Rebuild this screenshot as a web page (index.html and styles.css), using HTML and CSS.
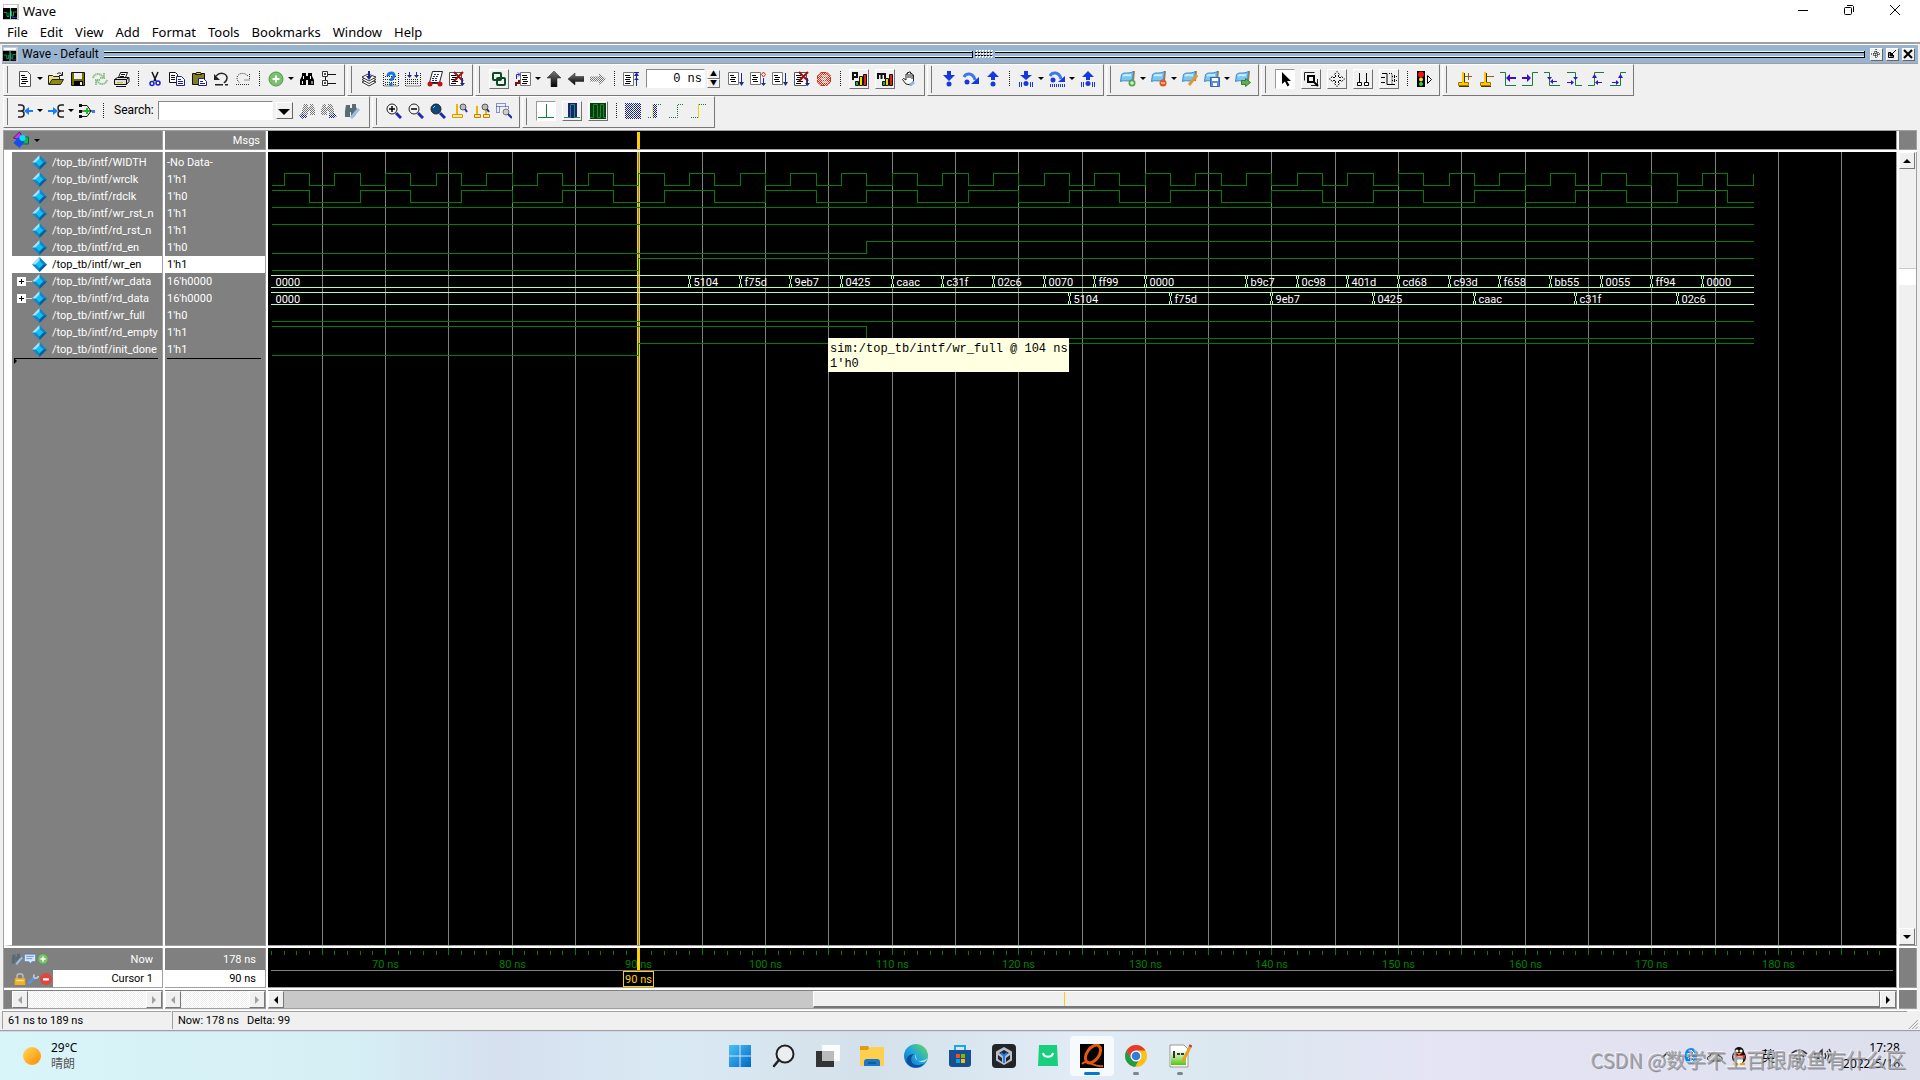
FILE: index.html
```html
<!DOCTYPE html>
<html lang="en">

<head>
    <meta charset="UTF-8">
    <meta name="viewport" content="width=device-width, initial-scale=1.0">
    <title>Wave</title>
    <link rel="stylesheet" href="styles.css">
</head>

<body>
    <!-- toolbar icons, 16x16 grid -->
    <svg class="sprite" width="0" height="0" aria-hidden="true">
        <defs>
            <linearGradient id="g-blue" x1="0" y1="0" x2="1" y2="1"><stop offset="0" stop-color="#4cc2f7"/><stop offset="1" stop-color="#0067c8"/></linearGradient>
            <linearGradient id="g-edge" x1="0" y1="1" x2="1" y2="0"><stop offset="0" stop-color="#0b62c4"/><stop offset=".5" stop-color="#1fa6dc"/><stop offset="1" stop-color="#6be04a"/></linearGradient>
            <linearGradient id="g-sun" x1="0" y1="0" x2="1" y2="1"><stop offset="0" stop-color="#ffd95a"/><stop offset="1" stop-color="#ff8a00"/></linearGradient>
            <linearGradient id="g-dark" x1="0" y1="0" x2="0" y2="1"><stop offset="0" stop-color="#777"/><stop offset="1" stop-color="#000"/></linearGradient>
            <linearGradient id="g-note" x1="0" y1="0" x2="0" y2="1"><stop offset="0" stop-color="#fff"/><stop offset="1" stop-color="#54c70c"/></linearGradient>
            <pattern id="p-dot" width="2" height="2" patternUnits="userSpaceOnUse"><path d="M0 0h1v1H0zM1 1h1v1H1z" fill="#777"/></pattern>
            <pattern id="p-navy" width="2" height="2" patternUnits="userSpaceOnUse"><path d="M0 0h1v1H0zM1 1h1v1H1z" fill="#1b1f80"/></pattern>
            <pattern id="p-red" width="2" height="2" patternUnits="userSpaceOnUse"><path d="M0 0h1v1H0zM1 1h1v1H1z" fill="#e8220c"/></pattern>
        </defs>
        <symbol id="wave" viewBox="0 0 16 16"><path fill="#c8c8c8" d="M0 0h16v16H0z"/><path fill="#fff" d="M1 1h13v3H1z"/><path d="M0 4h14v11H0z"/><path fill="none" stroke="#12a53c" d="M1 8.500h3v4h2v-4M8.500 7v5h2V8h3"/><path stroke="#56d7e8" d="M7.500 4v11"/><path stroke="#3527c9" d="M9 13.500h5"/></symbol>
        <symbol id="doc" viewBox="0 0 16 16"><path fill="#fff" stroke="#555" d="M2.500.5h8l3 3v12h-11z"/><path stroke="#000" d="M4 4.500h4M5 6.500h5M4 8.500h6M5 10.500h6M4 12.500h5"/></symbol>
        <symbol id="open" viewBox="0 0 16 16"><path fill="#e8e070" stroke="#222" d="M.5 13.500v-9h4l1 1h6v3"/><path fill="#8c8a10" stroke="#222" d="M1 13.500l3-5h11.500l-3 5z"/><path fill="none" stroke="#111" d="M9 3c2-2 4-1 5 1M14.500 1v3.500H11"/></symbol>
        <symbol id="save" viewBox="0 0 16 16"><path fill="#6f6f00" stroke="#111" d="M1.500 1.500h13v13h-13z"/><path fill="#eee" d="M4 2h8v6H4z"/><path d="M4 10h9v5H4z"/><path fill="#eee" d="M10 11h2v3h-2z"/></symbol>
        <symbol id="refresh" viewBox="0 0 16 16"><g fill="none" stroke="#8cc08a" stroke-width="2" stroke-dasharray="1.500 .5"><path d="M1 7c1-4 5-5 8-3l3 2M15 9c-1 4-5 5-8 3L4 10"/><path d="M12 2v5H8M4 14V9h4"/></g></symbol>
        <symbol id="print" viewBox="0 0 16 16"><path fill="#fff" stroke="#111" d="M4.500 6.500l2-5h7l-2 5z"/><path fill="#ddd" stroke="#111" d="M.5 8.500l3-2h11l-2 2zM.5 8.500h12v5H.5zM12.500 13.500l2.500-3v-4l-2.500 2"/><path stroke="#c8c400" d="M3 11.500h6"/><path stroke="#111" d="M7 3.500h4M6 5.500h4M2 15.500h10"/></symbol>
        <symbol id="cut" viewBox="0 0 16 16"><path fill="none" stroke="#111" stroke-width="1.500" d="M5 1l4 9M11 1L7 10"/><g fill="none" stroke="#1420d8" stroke-width="1.500"><circle cx="5" cy="12.500" r="2"/><circle cx="11" cy="12" r="2"/></g></symbol>
        <symbol id="copy" viewBox="0 0 16 16"><path fill="#fff" stroke="#111" d="M.5 1.500h6l2 2v8h-8z"/><path stroke="#111" d="M2 4.500h4M2 6.500h4M2 8.500h4"/><path fill="#fff" stroke="#1b1f90" d="M7.500 5.500h5l3 3v6h-8z"/><path stroke="#1b1f90" d="M9 8.500h3M9 10.500h5M9 12.500h5"/></symbol>
        <symbol id="paste" viewBox="0 0 16 16"><path fill="#827e20" stroke="#111" d="M1.500 2.500h12v11h-12z"/><path fill="#f3e400" stroke="#111" d="M4.500 3.500l1-2h4l1 2z"/><path fill="#fff" stroke="#1b1f90" d="M7.500 7.500h5l3 3v4h-8z"/><path stroke="#1b1f90" d="M9 10.500h3M9 12.500h5"/></symbol>
        <symbol id="undo" viewBox="0 0 16 16"><path fill="none" stroke="#222" stroke-width="1.500" d="M3 5c5-5 11-2 11 2 0 3-2 4-3 5"/><path fill="#222" d="M1 3v6h6zM2 13h8v1.500H2zM12 13h3v1.500h-3z"/></symbol>
        <symbol id="redo" viewBox="0 0 16 16"><g fill="none" stroke="#333" stroke-dasharray="1 1"><path d="M13 5C8 0 2 3 2 7c0 3 2 4 3 5M14.500 3v6H9M1 13.500h14"/></g></symbol>
        <symbol id="plus" viewBox="0 0 16 16"><circle cx="8" cy="8" r="7" fill="#7cbf6d" stroke="#4b9b43"/><path stroke="#fff" stroke-width="2" d="M8 4.500v7M4.500 8h7"/></symbol>
        <symbol id="find" viewBox="0 0 16 16"><path d="M3 2h4v3h2V2h4v3l2 4v5h-6V9H7v5H1V9l2-4z"/><path stroke="#fff" d="M4.500 5v3M11.500 5v3M3.500 10v3M13 10v3"/></symbol>
        <symbol id="tree" viewBox="0 0 16 16"><path fill="#fff" stroke="#333" d="M1.500.5h5v5h-5zM1.500 9.500h5v5h-5z"/><path stroke="#111" d="M3 3h2M4 2v2M3 12h2M4 11v2M7 3.500h8M7 12.500h8M4.500 6v3"/></symbol>
        <symbol id="compile" viewBox="0 0 16 16"><g fill="#fff" stroke="#333"><path d="M1 11l6-3 8 3-7 4z"/><path d="M1 8.500l6-3 8 3-7 4z"/><path d="M1 6l6-3 8 3-7 4z"/></g><path fill="#1b2a90" d="M7 0h2v5h2L8 9 5 5h2z"/></symbol>
        <symbol id="compile-q" viewBox="0 0 16 16"><path fill="none" stroke="#222" stroke-dasharray="1 1" d="M.5 2v13h15V2M2 5.500h12M2 8.500h12M2 11.500h12M2 13.500h12"/><path fill="none" stroke="#1878e0" stroke-width="3" d="M5 5c0-4 7-4 6 0 0 2-3 2-3 5M8 12v3"/></symbol>
        <symbol id="compile-all" viewBox="0 0 16 16"><path fill="none" stroke="#222" stroke-dasharray="1 1" d="M.5 2v13h15V2M2 8.500h12M2 10.500h12M2 12.500h12"/><path fill="#1b2a90" d="M4 1h1v3h2L4.500 7 2 4h2zM11 1h1v3h2l-2.500 3L9 4h2z"/></symbol>
        <symbol id="simulate" viewBox="0 0 16 16"><path fill="#fff" stroke="#222" d="M5.500.5h10l-3 11h-10z"/><path stroke="#1b2a90" stroke-dasharray="2 1" d="M7 3.500h6M6 5.500h6M5 7.500h6M5 9.500h6"/><path stroke="#333" d="M3 12.500h9"/><circle cx="3" cy="13" r="2.500" fill="#c81010"/><circle cx="13" cy="13" r="2.500" fill="#c81010"/></symbol>
        <symbol id="break" viewBox="0 0 16 16"><path fill="#fff" stroke="#555" d="M.5 1.500h12v13H.5z"/><path stroke="#000" d="M2 4.500h5M3 6.500h6M2 8.500h6M3 10.500h6M2 12.500h5"/><path stroke="#a01010" stroke-width="2" d="M5 1l9 9M14 1L5 10"/><path fill="#1b2a90" d="M13 7h1v5h2l-2.500 3L11 12h2z"/></symbol>
        <symbol id="links" viewBox="0 0 16 16"><g fill="none" stroke="#0b4a26" stroke-width="2"><rect x="2" y="2" width="8" height="7" rx="1"/><rect x="6" y="7" width="8" height="7" rx="1"/></g></symbol>
        <symbol id="env" viewBox="0 0 16 16"><path fill="#fff" stroke="#777" d="M5.500 1.500h10v13h-10z"/><path stroke="#000" d="M7 4.500h5M8 6.500h5M7 8.500h5M8 10.500h5M7 12.500h5"/><path fill="none" stroke="#1525c8" d="M1.500 8V3.500h3M3 1.500l2 2-2 2"/><path fill="none" stroke="#801010" stroke-width="2" d="M4 9v3H1v3"/></symbol>
        <symbol id="arrow-up" viewBox="0 0 16 16"><path fill="url(#g-dark)" stroke="#222" stroke-width=".5" d="M8 0l7 7h-4v9H5V7H1z"/></symbol>
        <symbol id="arrow-left" viewBox="0 0 16 16"><path fill="url(#g-dark)" stroke="#222" stroke-width=".5" d="M0 8l7-6v3.500h9v5H7V14z"/></symbol>
        <symbol id="arrow-right" viewBox="0 0 16 16"><path fill="url(#p-dot)" d="M16 8L9 2v3.500H0v5h9V14z"/></symbol>
        <symbol id="restart" viewBox="0 0 16 16"><path fill="#fff" stroke="#777" d="M.5 1.500h10v13H.5z"/><path stroke="#000" d="M2 4.500h5M3 6.500h5M2 8.500h5M3 10.500h5M2 12.500h5"/><path fill="#1b2a90" d="M11 1h5v1h-2l2 3h-2v2l2 2h-2v6h-1V9h-2l2-2V5h-2l2-3h-2z"/></symbol>
        <symbol id="run" viewBox="0 0 16 16"><path fill="#fff" stroke="#777" d="M.5 1.500h10v12H.5z"/><path stroke="#000" d="M2 4.500h4M3 6.500h5M2 8.500h5M3 10.500h5"/><path fill="#1b2a90" d="M13 2h1v9h2l-2.500 4-2.500-4h2z"/></symbol>
        <symbol id="run-cont" viewBox="0 0 16 16"><path fill="#fff" stroke="#777" d="M.5 1.500h10v12H.5z"/><path stroke="#000" d="M2 4.500h4M3 6.500h5M2 8.500h5M3 10.500h5"/><path fill="none" stroke="#e8220c" d="M13.500 1l2 2.500-2 2.500-2-2.500z"/><path fill="#1b2a90" d="M13 7h1v5h2l-2.500 3-2.500-3h2z"/></symbol>
        <symbol id="stop" viewBox="0 0 16 16"><path fill="url(#p-red)" d="M5 1h6l4 4v6l-4 4H5l-4-4V5z"/><path fill="none" stroke="#e8220c" d="M5 1.500h6l3.500 3.500v6L11 14.500H5L1.500 11V5z" stroke-dasharray="2 1"/><path stroke="#fff" d="M6 5h6M5 8h5M6 11h6"/></symbol>
        <symbol id="perf" viewBox="0 0 16 16"><path fill="none" stroke="#111" stroke-width="2" d="M2 9V2h4v4H2"/><path stroke="#111" fill="#18b818" d="M4.500 10.500h3v4h-3z"/><path stroke="#111" fill="#f5d800" d="M8.500 5.500h3v9h-3z"/><path stroke="#111" fill="#e82010" d="M12.500 3.500h3v11h-3z"/></symbol>
        <symbol id="mem" viewBox="0 0 16 16"><path fill="none" stroke="#111" stroke-width="2" d="M1 8V3h7v5M4.500 3v5"/><path stroke="#111" fill="#18b818" d="M5.500 10.500h3v4h-3z"/><path stroke="#111" fill="#f5d800" d="M8.500 7.500h3v7h-3z"/><path stroke="#111" fill="#e82010" d="M12.500 3.500h3v11h-3z"/></symbol>
        <symbol id="hand" viewBox="0 0 16 16"><path fill="#fff" stroke="#222" d="M5 13L1.500 8.500l1-1L5 9V3h1.500V1.500H8V1h1.500v1.500H11V4h1.500v6L10 14z"/><path stroke="#222" d="M7 3v4M9 3v4M11 4v4"/><path stroke="#8bb5e6" stroke-width="3" d="M9 14l4-3"/></symbol>
        <symbol id="step-in" viewBox="0 0 16 16"><path fill="#1738e0" d="M6 0h4v4h4L8 10 2 4h4z"/><circle cx="8" cy="13" r="2.500" fill="#1738e0"/></symbol>
        <symbol id="step-over" viewBox="0 0 16 16"><path fill="none" stroke="#3f78e8" stroke-width="3" d="M1 6c2-4 9-5 11 3"/><path fill="#1738e0" d="M16 6v7H8z"/><circle cx="4" cy="11" r="2.500" fill="#1738e0"/></symbol>
        <symbol id="step-out" viewBox="0 0 16 16"><path fill="#1738e0" d="M6 9h4V6h4L8 0 2 6h4z"/><circle cx="8" cy="13" r="2.500" fill="#1738e0"/></symbol>
        <symbol id="step-in2" viewBox="0 0 16 16"><path fill="#1738e0" d="M6 0h4v4h4L8 9 2 4h4z"/><circle cx="8" cy="12.500" r="2.500" fill="#1738e0"/><path stroke="#1738e0" d="M1.500 11v5M3.500 11v5M12.500 11v5M14.500 11v5"/></symbol>
        <symbol id="step-over2" viewBox="0 0 16 16"><path fill="none" stroke="#3f78e8" stroke-width="3" d="M1 5c2-4 9-5 11 3"/><path fill="#1738e0" d="M16 5v6H9z"/><circle cx="4" cy="9" r="2.500" fill="#1738e0"/><path stroke="#1738e0" stroke-width="3" stroke-dasharray="1 1" d="M1 14.500h15"/></symbol>
        <symbol id="step-out2" viewBox="0 0 16 16"><path fill="#1738e0" d="M6 9h4V6h4L8 0 2 6h4z"/><circle cx="8" cy="12.500" r="2.500" fill="#1738e0"/><path stroke="#1738e0" d="M1.500 11v5M3.500 11v5M12.500 11v5M14.500 11v5"/></symbol>
        <symbol id="flag" viewBox="0 0 16 16"><path stroke="#b87a2c" stroke-width="2" d="M14 0l-1 10"/><path fill="#79c8f4" stroke="#3f86c6" d="M1.500 3.500c3-3 6 0 12-3l-1 8c-5 3-8 0-12 2z"/><path stroke="#c8ecff" stroke-width="2" d="M3 5c3-2 5 0 8-1"/></symbol>
        <symbol id="flag-add" viewBox="0 0 16 16"><use href="#flag"/><circle cx="12" cy="12" r="3.500" fill="#57a84c"/><path stroke="#fff" d="M12 10v4M10 12h4"/></symbol>
        <symbol id="flag-del" viewBox="0 0 16 16"><use href="#flag"/><circle cx="12" cy="12" r="3.500" fill="#e05a1c"/><path stroke="#fff" d="M10 12h4"/></symbol>
        <symbol id="flag-edit" viewBox="0 0 16 16"><use href="#flag"/><path stroke="#d89a3c" stroke-width="3" d="M15 4l-8 10"/></symbol>
        <symbol id="flag-save" viewBox="0 0 16 16"><use href="#flag"/><path fill="#5a8fdc" stroke="#3564b0" d="M6.500 6.500h9v9h-9z"/><path fill="#fff" d="M8 7h6v3H8zM9 12h4v3H9z"/></symbol>
        <symbol id="flag-go" viewBox="0 0 16 16"><use href="#flag"/><path fill="#5fae52" stroke="#3a7d31" d="M6.500 9.500h4v-2l5 4-5 4v-2h-4z"/></symbol>
        <symbol id="pointer" viewBox="0 0 16 16"><path d="M5 1v12l3-2.500 2.500 5L12.500 14l-2.500-4h4z"/></symbol>
        <symbol id="zoom-mode" viewBox="0 0 16 16"><path fill="none" stroke="#222" d="M1.500 9.500v-8h10M14.500 8v6.500H8"/><path fill="none" stroke="#000" stroke-width="2" d="M5 5h6v6H5z"/><path stroke="#000" stroke-width="2" d="M11 11l4 4"/></symbol>
        <symbol id="pan" viewBox="0 0 16 16"><g fill="none" stroke="#111"><path d="M5.500 3.500L8 .5l2.500 3M5.500 12.500l2.500 3 2.500-3M3.500 5.500L.5 8l3 2.500M12.500 5.500l3 2.500-3 2.500M6.500 4v2.500H4M9.500 4v2.500H12M6.500 12V9.500H4M9.500 12V9.500H12" stroke-dasharray="2 1"/></g></symbol>
        <symbol id="two-cur" viewBox="0 0 16 16"><path stroke="#000" d="M4.500 2v10M11.500 2v10"/><path fill="#fff" stroke="#000" d="M2.500 11.500h4v3h-4zM9.500 11.500h4v3h-4z"/></symbol>
        <symbol id="edit-mode" viewBox="0 0 16 16"><path fill="none" stroke="#000" d="M1 2.500h5v11h8M0 6.500h4M0 11.500h4"/><path fill="none" stroke="#000" stroke-dasharray="1 1" d="M8 2.500h3v11M11 5.500h5M11 9.500h5M13.500 4v4M13.500 8v4"/></symbol>
        <symbol id="traffic" viewBox="0 0 16 16"><path d="M1 0h8v16H1z"/><circle cx="5" cy="3.500" r="3" fill="#f01414"/><circle cx="5" cy="8.500" r="2" fill="#efe63c"/><circle cx="5" cy="13" r="2" fill="#26d83c"/><path fill="#fff" stroke="#000" d="M11.500 4.500l4 4-4 4z"/></symbol>
        <symbol id="cur" viewBox="0 0 16 16"><path stroke="#3e3410" d="M3 15.500h10M8.500 2v10"/><path fill="#ffc800" stroke="#a07800" d="M2.500 11.500h10v3h-10z"/><path stroke="#ffc800" stroke-width="2" d="M7 1v11"/></symbol>
        <symbol id="cur-add" viewBox="0 0 16 16"><use href="#cur"/><path stroke="#8a6800" d="M9 5.500h7M12.500 2v7"/></symbol>
        <symbol id="cur-del" viewBox="0 0 16 16"><use href="#cur"/><path stroke="#8a6800" d="M9 5.500h7"/></symbol>
        <symbol id="prev-tr" viewBox="0 0 16 16"><path fill="none" stroke="#128038" d="M0 1.500h5.500v13H16"/><path fill="#3a10d0" d="M6 7l4-4v3h6v2h-6v3z"/></symbol>
        <symbol id="next-tr" viewBox="0 0 16 16"><path fill="none" stroke="#128038" d="M0 14.500h10.500v-13H16"/><path fill="#3a10d0" d="M9 7L5 3v3H0v2h5v3z"/></symbol>
        <symbol id="prev-fall" viewBox="0 0 16 16"><path fill="none" stroke="#128038" d="M0 1.500h5.500v13H16"/><path fill="#3a10d0" d="M3 6h5L5.500 9zM6 10.500l3-2.500v2h4v1H9v2z"/></symbol>
        <symbol id="next-fall" viewBox="0 0 16 16"><path fill="none" stroke="#128038" d="M1 1.500h8.500v13H16"/><path fill="#3a10d0" d="M7 6h5L9.500 9zM8 11.500L5 9v2H1v1h4v2z"/></symbol>
        <symbol id="prev-rise" viewBox="0 0 16 16"><path fill="none" stroke="#128038" d="M0 14.500h6.500v-13H16"/><path fill="#3a10d0" d="M4 7h5L6.500 3zM7 11.500L10 9v2h4v1h-4v2z"/></symbol>
        <symbol id="next-rise" viewBox="0 0 16 16"><path fill="none" stroke="#128038" d="M0 14.500h10.500v-13H16"/><path fill="#3a10d0" d="M8 7h5l-2.500-4zM9 11.500L6 9v2H2v1h4v2z"/></symbol>
        <symbol id="drivers" viewBox="0 0 16 16"><path fill="none" stroke="#222" stroke-width="1.500" d="M1 2h3c4 0 4 6 0 6H1M4 8c4 0 4 6 0 6H1"/><path fill="#1a7ef0" d="M7 8l5-4v3h4v2h-4v3z"/></symbol>
        <symbol id="readers" viewBox="0 0 16 16"><path fill="none" stroke="#222" stroke-width="1.500" d="M16 2h-3c-4 0-4 6 0 6h3M13 8c-4 0-4 6 0 6h3"/><path fill="#1a7ef0" d="M10 8L5 4v3H0v2h5v3z"/></symbol>
        <symbol id="trace" viewBox="0 0 16 16"><path fill="none" stroke="#111" d="M2 2.500h6l4 5.500-4 5.500H2M2 8h12"/><path fill="#111" d="M0 1h3v3H0zM0 7h3v3H0zM0 12h3v3H0z"/><path stroke="#18b828" stroke-width="2" d="M8 5v6M5 8h6"/><path fill="#3a78e8" d="M13 7h3v3h-3z"/></symbol>
        <symbol id="find-prev" viewBox="0 0 16 16"><path fill="url(#p-dot)" d="M5 1h4v3h2V1h3l2 6v5h-5V8H9v4H3V7z"/><path fill="url(#p-navy)" d="M0 13l4-4v3h4v3H4v1z"/></symbol>
        <symbol id="find-next" viewBox="0 0 16 16"><path fill="url(#p-dot)" d="M2 1h3v3h2V1h4l2 6v5H8V8H6v4H0V7z"/><path fill="url(#p-navy)" d="M16 13l-4-4v3H8v3h4v1z"/></symbol>
        <symbol id="find-opt" viewBox="0 0 16 16"><path fill="#5a6b74" d="M2 2h4v3h2V1h4v3l2 4-4 6H7V9H6v5H1V8z"/><path fill="none" stroke="#9bbde0" stroke-width="3" d="M15 6l-3 3-5 6"/></symbol>
        <symbol id="lens" viewBox="0 0 16 16"><circle cx="6" cy="6" r="5" stroke="#222"/><path stroke="#1d2bb0" stroke-width="3" d="M10 10l5 5"/></symbol>
        <symbol id="zoom-in" viewBox="0 0 16 16"><use href="#lens" fill="#f4f4f4"/><path stroke="#000" stroke-width="1.500" d="M3 6h6M6 3v6"/></symbol>
        <symbol id="zoom-out" viewBox="0 0 16 16"><use href="#lens" fill="#f4f4f4"/><path stroke="#000" stroke-width="1.500" d="M3 6h6"/></symbol>
        <symbol id="zoom-full" viewBox="0 0 16 16"><use href="#lens" fill="#0d4a7a"/><path stroke="#8fd0f0" d="M3 5l2-2"/></symbol>
        <symbol id="zoom-cur" viewBox="0 0 16 16"><path fill="#ffe9a0" stroke="#d89a00" d="M.5 11.500h10v3H.5z"/><path stroke="#f0b400" stroke-width="2" d="M5 1v10"/><circle cx="11" cy="4" r="3" fill="#bbb" stroke="#555"/><path stroke="#1d2bb0" stroke-width="2" d="M13 6l2 3"/></symbol>
        <symbol id="zoom-two" viewBox="0 0 16 16"><path fill="#ffe9a0" stroke="#c08000" d="M.5 11.500h6v3h-6zM9.500 11.500h6v3h-6z"/><path stroke="#f0b400" stroke-width="2" d="M3 3v8M12 6v5"/><circle cx="11" cy="4" r="3" fill="#bbb" stroke="#555"/><path stroke="#1d2bb0" stroke-width="2" d="M13 6l2 3"/></symbol>
        <symbol id="zoom-area" viewBox="0 0 16 16"><path fill="none" stroke="#1d2bb0" stroke-dasharray="1 1" d="M.5 3.500v-3h9v3M.5 3.500h3v6h-3zM3.500 3.500h9v3"/><circle cx="10" cy="9" r="3" fill="#ccc" stroke="#777"/><path stroke="#1d2bb0" stroke-width="2" d="M12 11l4 4"/></symbol>
        <symbol id="lit" viewBox="0 0 16 16"><path fill="none" stroke="#118038" d="M0 14.500h16M8.500 1v13"/></symbol>
        <symbol id="blue-w" viewBox="0 0 16 16"><path fill="#1b1f80" d="M4 0h9v15H4z"/><path fill="none" stroke="#1a9a48" d="M0 14.500h6.500v-13h4v13H16"/></symbol>
        <symbol id="green-w" viewBox="0 0 16 16"><path fill="#063f0c" d="M0 0h16v16H0z"/><path fill="none" stroke="#1a8a38" d="M0 14.500h3.500v-13h4v13h3v-13h3v13H16"/></symbol>
        <symbol id="navy-dots" viewBox="0 0 16 16"><path fill="url(#p-navy)" d="M0 0h16v16H0z"/><path stroke="#128038" stroke-dasharray="1 1" d="M8.500 0v16"/></symbol>
        <symbol id="edge-a" viewBox="0 0 16 16"><path fill="url(#p-navy)" d="M6 1h4v14H6z"/><path stroke="#e8d800" stroke-dasharray="1 1" d="M5.500 1v14"/><path stroke="#128038" stroke-dasharray="1 1" d="M1 14.500h4M9 1.500h6"/></symbol>
        <symbol id="edge-b" viewBox="0 0 16 16"><path fill="none" stroke="#128038" stroke-dasharray="1 1" d="M0 14.500h8.500v-13H15"/></symbol>
        <symbol id="edge-c" viewBox="0 0 16 16"><path fill="none" stroke="#128038" stroke-dasharray="1 1" d="M0 14.500h7M8 1.500h7"/><path stroke="#e8d800" d="M7.500 1v14"/></symbol>
        <symbol id="gem" viewBox="0 0 16 16"><path fill="#1486c6" d="M8 0l8 8-8 8-8-8z"/><path fill="#a5e4fa" d="M8 0L0 8h4l4-4z"/><path fill="#0a5f94" d="M16 8l-8 8v-4l4-4z"/><path fill="#0ac3f8" d="M8 4l4 4-4 4-4-4z"/></symbol>
        <symbol id="wrench" viewBox="0 0 16 16"><path fill="none" stroke="#5f93da" stroke-width="4" stroke-linecap="round" d="M3 13l6-6"/><path fill="none" stroke="#c4d2e2" stroke-width="2" d="M10 2c-2 2-1 5 1 5s4-1 4-3"/></symbol>
    </svg>

    <header class="titlebar">
        <svg class="app-icon"><use href="#wave"/></svg>
        <span>Wave</span>
        <div class="win-btns">
            <button aria-label="Minimize"><svg viewBox="0 0 12 12"><path d="M1 6.500h10"/></svg></button>
            <button aria-label="Restore"><svg viewBox="0 0 12 12"><rect x="1.500" y="3.500" width="7" height="7" rx="1"/><path d="M4 1.500h5.500l1 1V8"/></svg></button>
            <button aria-label="Close"><svg viewBox="0 0 12 12"><path d="M1 1l10 10M11 1L1 11"/></svg></button>
        </div>
    </header>
    <nav class="menubar">
        <a href="#">File</a><a href="#">Edit</a><a href="#">View</a><a href="#">Add</a><a href="#">Format</a><a href="#">Tools</a><a href="#">Bookmarks</a><a href="#">Window</a><a href="#">Help</a>
    </nav>

    <main class="frame">
        <div class="dock">
            <svg class="dock-icon"><use href="#wave"/></svg>
            <span>Wave - Default</span>
            <i class="rails"></i><i class="dots"></i><i class="rails"></i>
            <button aria-label="Move"><svg viewBox="0 0 10 10"><path stroke-dasharray="1 1" d="M5 0v10M0 5h10M3 3h4v4H3z"/></svg></button>
            <button aria-label="Undock"><svg viewBox="0 0 10 10"><path d="M4 3.500H1.500v5h5V6M9 1L4 6"/><path class="solid" d="M3 3v4h4z"/></svg></button>
            <button aria-label="Close pane"><svg viewBox="0 0 10 10"><path class="thick" d="M1 1l8 8M9 1L1 9"/></svg></button>
        </div>

        <div class="toolbars">
            <div class="tools">
                <button aria-label="New"><svg><use href="#doc"/></svg></button><i class="dd"></i>
                <button aria-label="Open"><svg><use href="#open"/></svg></button>
                <button aria-label="Save"><svg><use href="#save"/></svg></button>
                <button aria-label="Reload"><svg><use href="#refresh"/></svg></button>
                <button aria-label="Print"><svg><use href="#print"/></svg></button>
                <i class="sep"></i>
                <button aria-label="Cut"><svg><use href="#cut"/></svg></button>
                <button aria-label="Copy"><svg><use href="#copy"/></svg></button>
                <button aria-label="Paste"><svg><use href="#paste"/></svg></button>
                <button aria-label="Undo"><svg><use href="#undo"/></svg></button>
                <button aria-label="Redo"><svg><use href="#redo"/></svg></button>
                <i class="sep"></i>
                <button aria-label="Add"><svg><use href="#plus"/></svg></button><i class="dd"></i>
                <button aria-label="Find"><svg><use href="#find"/></svg></button>
                <button aria-label="Expand tree"><svg><use href="#tree"/></svg></button>
            </div>
            <div class="tools">
                <button aria-label="Compile"><svg><use href="#compile"/></svg></button>
                <button aria-label="Compile out of date"><svg><use href="#compile-q"/></svg></button>
                <button aria-label="Compile all"><svg><use href="#compile-all"/></svg></button>
                <button aria-label="Simulate"><svg><use href="#simulate"/></svg></button>
                <button aria-label="Break"><svg><use href="#break"/></svg></button>
            </div>
            <div class="tools">
                <button class="raised" aria-label="Link"><svg><use href="#links"/></svg></button>
                <button aria-label="Environment"><svg><use href="#env"/></svg></button><i class="dd"></i>
                <button aria-label="Up"><svg><use href="#arrow-up"/></svg></button>
                <button aria-label="Back"><svg><use href="#arrow-left"/></svg></button>
                <button aria-label="Forward"><svg><use href="#arrow-right"/></svg></button>
                <i class="sep"></i>
                <button aria-label="Restart"><svg><use href="#restart"/></svg></button>
                <input class="runlen" type="text" value="0 ns" aria-label="Run length">
                <span class="spin"><button aria-label="More">&#9650;</button><button aria-label="Less">&#9660;</button></span>
                <button aria-label="Run"><svg><use href="#run"/></svg></button>
                <button aria-label="Continue run"><svg><use href="#run-cont"/></svg></button>
                <button aria-label="Run all"><svg><use href="#run"/></svg></button>
                <button aria-label="Break run"><svg><use href="#break"/></svg></button>
                <button aria-label="Stop"><svg><use href="#stop"/></svg></button>
                <i class="sep"></i>
                <button class="raised" aria-label="Performance profile"><svg><use href="#perf"/></svg></button>
                <button class="raised" aria-label="Memory profile"><svg><use href="#mem"/></svg></button>
                <button aria-label="Edit breakpoints"><svg><use href="#hand"/></svg></button>
            </div>
            <div class="tools">
                <button aria-label="Step into"><svg><use href="#step-in"/></svg></button>
                <button aria-label="Step over"><svg><use href="#step-over"/></svg></button>
                <button aria-label="Step out"><svg><use href="#step-out"/></svg></button>
                <i class="sep"></i>
                <button aria-label="Step into current"><svg><use href="#step-in2"/></svg></button><i class="dd"></i>
                <button aria-label="Step over current"><svg><use href="#step-over2"/></svg></button><i class="dd"></i>
                <button aria-label="Step out current"><svg><use href="#step-out2"/></svg></button>
            </div>
            <div class="tools">
                <button aria-label="Add bookmark"><svg><use href="#flag-add"/></svg></button><i class="dd"></i>
                <button aria-label="Delete bookmark"><svg><use href="#flag-del"/></svg></button><i class="dd"></i>
                <button aria-label="Edit bookmark"><svg><use href="#flag-edit"/></svg></button>
                <button aria-label="Save bookmarks"><svg><use href="#flag-save"/></svg></button><i class="dd"></i>
                <button aria-label="Go to bookmark"><svg><use href="#flag-go"/></svg></button>
            </div>
            <div class="tools">
                <button class="raised on" aria-label="Select mode"><svg><use href="#pointer"/></svg></button>
                <button class="raised" aria-label="Zoom mode"><svg><use href="#zoom-mode"/></svg></button>
                <button class="raised" aria-label="Pan mode"><svg><use href="#pan"/></svg></button>
                <button class="raised" aria-label="Two cursor mode"><svg><use href="#two-cur"/></svg></button>
                <button class="raised" aria-label="Edit mode"><svg><use href="#edit-mode"/></svg></button>
                <i class="sep"></i>
                <button aria-label="Stop drawing"><svg><use href="#traffic"/></svg></button>
            </div>
            <div class="tools">
                <button aria-label="Insert cursor"><svg><use href="#cur-add"/></svg></button>
                <button aria-label="Delete cursor"><svg><use href="#cur-del"/></svg></button>
                <button aria-label="Previous transition"><svg><use href="#prev-tr"/></svg></button>
                <button aria-label="Next transition"><svg><use href="#next-tr"/></svg></button>
                <button aria-label="Previous falling edge"><svg><use href="#prev-fall"/></svg></button>
                <button aria-label="Next falling edge"><svg><use href="#next-fall"/></svg></button>
                <button aria-label="Previous rising edge"><svg><use href="#prev-rise"/></svg></button>
                <button aria-label="Next rising edge"><svg><use href="#next-rise"/></svg></button>
            </div>
        </div>
        <div class="toolbars">
            <div class="tools">
                <button aria-label="Drivers"><svg><use href="#drivers"/></svg></button><i class="dd"></i>
                <button aria-label="Readers"><svg><use href="#readers"/></svg></button><i class="dd"></i>
                <button aria-label="Trace"><svg><use href="#trace"/></svg></button>
                <i class="sep"></i>
                <label for="search">Search:</label>
                <input class="search" id="search" type="text">
                <button class="drop" aria-label="Search history"></button>
                <button aria-label="Search backward"><svg><use href="#find-prev"/></svg></button>
                <button aria-label="Search forward"><svg><use href="#find-next"/></svg></button>
                <button class="wide" aria-label="Search options"><svg><use href="#find-opt"/></svg></button>
            </div>
            <div class="tools">
                <button aria-label="Zoom in"><svg><use href="#zoom-in"/></svg></button>
                <button aria-label="Zoom out"><svg><use href="#zoom-out"/></svg></button>
                <button aria-label="Zoom full"><svg><use href="#zoom-full"/></svg></button>
                <button aria-label="Zoom on cursor"><svg><use href="#zoom-cur"/></svg></button>
                <button aria-label="Zoom between cursors"><svg><use href="#zoom-two"/></svg></button>
                <button aria-label="Zoom other"><svg><use href="#zoom-area"/></svg></button>
            </div>
            <div class="tools">
                <button class="raised on" aria-label="Literal"><svg><use href="#lit"/></svg></button>
                <button class="raised" aria-label="Logic"><svg><use href="#blue-w"/></svg></button>
                <button class="raised" aria-label="Event"><svg><use href="#green-w"/></svg></button>
                <i class="sep"></i>
                <button aria-label="Expand all"><svg><use href="#navy-dots"/></svg></button>
                <button aria-label="Expand at cursor"><svg><use href="#edge-a"/></svg></button>
                <button aria-label="Collapse all"><svg><use href="#edge-b"/></svg></button>
                <button aria-label="Collapse at cursor"><svg><use href="#edge-c"/></svg></button>
            </div>
        </div>

        <div class="panes">
            <div class="head head-names">
                <svg class="objs" viewBox="0 0 16 16"><path fill="#1fae4c" stroke="#066" d="M8 5h7v7H8z"/><path fill="#c637e8" stroke="#518" d="M0 6l6-6 3 5-3 3z"/><path fill="#1450e8" d="M5 5l6 5-5 6-6-5z"/><circle cx="9" cy="6" r="3" fill="#00e5ff"/></svg><i class="dd"></i>
            </div>
            <div class="head head-msgs">Msgs</div>
            <div class="head black"><svg id="top"></svg></div>
            <div class="corner"></div>

            <div class="names">
                <ul>
                    <li><svg><use href="#gem"/></svg>/top_tb/intf/WIDTH</li>
                    <li><svg><use href="#gem"/></svg>/top_tb/intf/wrclk</li>
                    <li><svg><use href="#gem"/></svg>/top_tb/intf/rdclk</li>
                    <li><svg><use href="#gem"/></svg>/top_tb/intf/wr_rst_n</li>
                    <li><svg><use href="#gem"/></svg>/top_tb/intf/rd_rst_n</li>
                    <li><svg><use href="#gem"/></svg>/top_tb/intf/rd_en</li>
                    <li class="sel"><svg><use href="#gem"/></svg>/top_tb/intf/wr_en</li>
                    <li><button class="exp" aria-label="Expand wr_data"></button><svg><use href="#gem"/></svg>/top_tb/intf/wr_data</li>
                    <li><button class="exp" aria-label="Expand rd_data"></button><svg><use href="#gem"/></svg>/top_tb/intf/rd_data</li>
                    <li><svg><use href="#gem"/></svg>/top_tb/intf/wr_full</li>
                    <li><svg><use href="#gem"/></svg>/top_tb/intf/rd_empty</li>
                    <li><svg><use href="#gem"/></svg>/top_tb/intf/init_done</li>
                </ul>
                <div class="end"></div>
            </div>
            <div class="values">
                <ul>
                    <li>-No Data-</li>
                    <li>1'h1</li>
                    <li>1'h0</li>
                    <li>1'h1</li>
                    <li>1'h1</li>
                    <li>1'h0</li>
                    <li class="sel">1'h1</li>
                    <li>16'h0000</li>
                    <li>16'h0000</li>
                    <li>1'h0</li>
                    <li>1'h1</li>
                    <li>1'h1</li>
                </ul>
                <div class="end"></div>
            </div>
            <div class="black waves">
                <svg id="waves"></svg>
                <div class="tip">sim:/top_tb/intf/wr_full @ 104 ns<br>1'h0</div>
            </div>
            <div class="vbar">
                <button class="arr up" aria-label="Scroll up"></button>
                <i class="v-thumb"></i><i class="v-page"></i><i class="v-rest"></i>
                <button class="arr down" aria-label="Scroll down"></button>
            </div>

            <div class="foot foot-names">
                <div class="now"><span class="mini"><svg><use href="#find-opt"/></svg><svg viewBox="0 0 16 16"><path fill="#dbe6f6" stroke="#4a7cc4" d="M.5 1.500h15v10h-5l-2 3-2-3h-6z"/><path stroke="#4a7cc4" d="M3 4.500h10M3 7.500h8"/></svg><svg><use href="#plus"/></svg></span>Now</div>
                <div class="cur"><span class="mini"><svg viewBox="0 0 16 16"><path fill="none" stroke="#bbb" stroke-width="2" d="M4 8V4c0-4 8-4 8 0v3"/><path fill="#f2b01e" d="M1 7h14v9H1z"/><path fill="#fbe29a" d="M3 9h10v2H3z"/></svg><svg><use href="#wrench"/></svg><svg viewBox="0 0 16 16"><circle cx="8" cy="8" r="8" fill="#e0463c"/><path fill="#fff" d="M4 7h8v3H4z"/></svg></span><b>Cursor 1</b></div>
            </div>
            <div class="foot foot-vals">
                <div class="now">178 ns</div>
                <div class="cur"><b>90 ns</b></div>
            </div>
            <div class="black ruler"><svg id="ruler"></svg></div>
            <div class="corner"></div>

            <div class="hbar dim first"><button class="arr left" aria-label="Scroll names left"></button><i></i><button class="arr right" aria-label="Scroll names right"></button></div>
            <div class="hbar dim"><button class="arr left" aria-label="Scroll values left"></button><i></i><button class="arr right" aria-label="Scroll values right"></button></div>
            <div class="hbar"><button class="arr left" aria-label="Scroll left"></button><i class="trough"></i><i class="thumb"></i><button class="arr right" aria-label="Scroll right"></button></div>
            <div class="corner"></div>
        </div>

        <footer class="status">
            <span>61 ns to 189 ns</span>
            <span>Now: 178 ns&nbsp;&nbsp; Delta: 99</span>
            <svg viewBox="0 0 12 12"><path d="M1 12L12 1M5 12l7-7M9 12l3-3"/></svg>
        </footer>
    </main>

    <div class="taskbar">
        <div class="weather">
            <svg viewBox="0 0 20 20"><circle cx="10" cy="10" r="9" fill="url(#g-sun)"/></svg>
            <div>29°C<br><span>晴朗</span></div>
        </div>
        <div class="apps">
            <button aria-label="Start"><svg viewBox="0 0 24 24"><path fill="url(#g-blue)" d="M1 1h10.500v10.500H1zM12.500 1H23v10.500H12.500zM1 12.500h10.500V23H1zM12.500 12.500H23V23H12.500z"/></svg></button>
            <button aria-label="Search"><svg viewBox="0 0 24 24"><circle cx="13" cy="10" r="8.500" fill="#e9eef2" stroke="#222" stroke-width="2"/><path stroke="#222" stroke-width="2.500" stroke-linecap="round" d="M7 16l-5 6"/></svg></button>
            <button aria-label="Task view"><svg viewBox="0 0 24 24"><path fill="#333" d="M0 7h18v16H0z"/><path fill="#fff" d="M6 1h18v16H6z" opacity=".9"/><path fill="#bbb" d="M6 7h12v10H6z"/></svg></button>
            <button aria-label="Explorer"><svg viewBox="0 0 24 24"><path fill="#e09e0b" d="M0 2h8l2 3h-2v6H0z"/><path fill="#ffd04e" d="M0 6h8l3-3h13v19H0z"/><path fill="#1976c8" d="M4 22v-4c0-2 1-3 3-3h10c2 0 3 1 3 3v4z"/><path stroke="#0d5596" stroke-width="1.500" d="M8 19h8"/></svg></button>
            <button aria-label="Edge"><svg viewBox="0 0 24 24"><circle cx="12" cy="12" r="12" fill="url(#g-edge)"/><path fill="#0c4f9e" d="M8 12c-3 7 3 12 13 7-5 6-14 6-18 0-2-5 2-9 7-9z"/><path fill="#dbe6f0" d="M12 10c-2 3 0 7 4 7 3 0 6-1 7.500-3l-1 2c-3 4-12 2-10.500-6z"/></svg></button>
            <button aria-label="Store"><svg viewBox="0 0 24 24"><path fill="none" stroke="#18a8ee" stroke-width="2" d="M7 7V2h10v5"/><path fill="#174f90" d="M1 6h22v14c0 2-1 3-3 3H4c-2 0-3-1-3-3z"/><path fill="#f25022" d="M8 10h4v4H8z"/><path fill="#7fba00" d="M13 10h4v4h-4z"/><path fill="#00a4ef" d="M8 15h4v4H8z"/><path fill="#ffb900" d="M13 15h4v4h-4z"/></svg></button>
            <button aria-label="Launcher"><svg viewBox="0 0 24 24"><rect width="24" height="24" rx="4" fill="#222428"/><path fill="#b9c0c8" d="M12 3l8 4.500v9L12 21l-8-4.500v-9z"/><path fill="#222428" d="M12 6l5 3-5 3-5-3zM6 11l4 3v4l-4-3zM18 11l-4 3v4l4-3z"/><path fill="none" stroke="#1f7cf0" stroke-width="2" d="M12 12v7M9 9l3 3 3-3"/></svg></button>
            <button aria-label="Mall"><svg viewBox="0 0 24 24"><path fill="#17cf7c" d="M3 1h18l1 21H2z"/><path fill="none" stroke="#fff" stroke-width="2" d="M7 9c1 5 9 5 10 0"/></svg></button>
            <button class="active" aria-label="Questa"><svg viewBox="0 0 24 24"><path d="M0 0h24v24H0z"/><g fill="none" stroke="#e8590c" stroke-width="3"><ellipse cx="13" cy="10" rx="6" ry="10" transform="rotate(35 13 10)"/><path d="M2 20c6-6 11 4 21 2" stroke-width="2"/></g></svg></button>
            <button class="open" aria-label="Chrome"><svg viewBox="0 0 24 24"><circle cx="12" cy="12" r="11" fill="#fbc116"/><path fill="#e33b2e" d="M2.500 6.500a11 11 0 0 1 19 0H12l-5 8z"/><path fill="#229a48" d="M2.500 6.500a11 11 0 0 0 8.500 16.400l5-8.900H7z"/><circle cx="12" cy="12" r="5.500" fill="#fff"/><circle cx="12" cy="12" r="4.300" fill="#2f7de1"/></svg></button>
            <button class="open" aria-label="Notepad++"><svg viewBox="0 0 24 24"><path fill="#fff" stroke="#999" d="M2 1h14l4 4v18H2z"/><path fill="url(#g-note)" d="M3 6h15v15H3z"/><path stroke="#333" stroke-width="2" d="M6 7v7M9 10h3M13 10h3"/><path stroke="#e8a020" stroke-width="3" d="M22 3l-7 14"/><path stroke="#c33" stroke-width="3" d="M23 1l-1 2"/></svg></button>
        </div>
        <div class="tray">
            <svg viewBox="0 0 18 18"><path fill="none" stroke="#333" stroke-width="1.500" d="M4 11l5-5 5 5"/></svg>
            <svg viewBox="0 0 18 18"><rect x="3" y="1" width="12" height="16" rx="6" fill="#0a84f0"/><path fill="none" stroke="#fff" d="M6 6l6 6-3 3V3l3 3-6 6"/></svg>
            <svg viewBox="0 0 18 18"><path fill="#bbb" stroke="#333" d="M4 14c-4-1-3-5 0-5 1-5 8-5 9 0 4 0 4 5 1 5z"/></svg>
            <svg viewBox="0 0 18 18"><ellipse cx="9" cy="10" rx="7" ry="7" fill="#111"/><ellipse cx="9" cy="5" rx="5" ry="5" fill="#111"/><ellipse cx="9" cy="13" rx="4" ry="4" fill="#fff"/><circle cx="7" cy="4" r="1.500" fill="#fff"/><circle cx="11" cy="4" r="1.500" fill="#fff"/><path fill="#f7a400" d="M6 6h6l-3 2zM3 16h5v2H3zM10 16h5v2h-5z"/><path fill="#e01f26" d="M3 8h12v3H3z"/></svg>
            <span class="ime">英</span>
            <svg viewBox="0 0 18 18"><g fill="none" stroke="#333" stroke-width="1.500"><path d="M1 7c5-5 11-5 16 0M4 10c3-3 7-3 10 0M6.500 12.500c2-1 3-1 5 0"/></g><circle cx="9" cy="15" r="1.500"/></svg>
            <svg viewBox="0 0 18 18"><path fill="none" stroke="#333" stroke-width="1.500" d="M1 7h3l4-4v12l-4-4H1zM11 6c1 2 1 4 0 6M13 4c2 3 2 7 0 10M15 2c3 4 3 10 0 14"/></svg>
            <div class="clock">17:28<br>2022/5/16</div>
        </div>
        <div class="mark">CSDN @数学不上百跟咸鱼有什么区</div>
    </div>

    <script src="script.js"></script>
</body>

</html>
```
FILE: styles.css
```css
* {
    box-sizing: border-box;
}
html, body {
    height: 100%;
}
body {
    margin: 0;
    display: flex;
    flex-direction: column;
    background: #fff;
    color: #000;
    font: 11px/17px Roboto, "Noto Sans CJK SC", sans-serif;
    overflow: hidden;
}
button {
    padding: 0;
    border: 0;
    background: none;
    font: inherit;
    color: inherit;
}
ul {
    margin: 0;
    padding: 0;
    list-style: none;
}
i {
    display: block;
    flex: none;
}
b {
    font-weight: normal;
}
svg {
    display: block;
    flex: none;
}
.sprite {
    position: absolute;
}

/* window title and menu */
.titlebar {
    display: flex;
    align-items: center;
    height: 23px;
    padding-left: 3px;
    gap: 4px;
    font-family: "Noto Sans", sans-serif;
    font-size: 13px;
}
.app-icon {
    width: 16px;
    height: 16px;
}
.win-btns {
    display: flex;
    align-self: flex-start;
    margin: 0 2px 0 auto;
}
.win-btns button {
    width: 46px;
    height: 20px;
}
.win-btns svg {
    width: 12px;
    height: 12px;
    margin: 0 auto;
    fill: none;
    stroke: #000;
}
.menubar {
    display: flex;
    gap: 12px;
    height: 19px;
    padding-left: 7px;
    font-family: "Noto Sans", sans-serif;
    font-size: 13px;
    line-height: 19px;
}
.menubar a {
    color: #000;
    text-decoration: none;
}

/* docked pane */
.frame {
    flex: 1;
    display: flex;
    flex-direction: column;
    min-height: 0;
    border-top: 2px solid #a0a0a0;
    border-bottom: 1px solid #a0a0a0;
    background: #f0f0f0;
}
.dock {
    display: flex;
    align-items: center;
    height: 20px;
    margin: 0 2px;
    padding: 0 3px 0 1px;
    border-top: 1px solid #fff;
    border-bottom: 1px solid #a0a0a0;
    background: #99b4d1;
}
.dock-icon {
    width: 15px;
    height: 15px;
}
.dock span {
    margin: 0 5px 0 4px;
    font-size: 12px;
}
.rails {
    flex: 1;
    height: 7px;
    border-right: 1px solid #000;
    background: linear-gradient(#dff 1px, #000 1px, #000 2px, #99b4d1 2px, #99b4d1 5px, #dff 5px, #dff 6px, #000 6px);
}
.dots {
    width: 18px;
    height: 8px;
    margin: 0 2px;
    background: conic-gradient(#fff 25%, transparent 0 50%, #000 0 75%, transparent 0) 0 0 / 3px 3px;
}
.dock button {
    width: 13px;
    height: 13px;
    margin-left: 3px;
    border: 1px solid;
    border-color: #fff #666 #666 #fff;
    background: #f0f0f0;
}
.dock .rails + button {
    margin-left: 5px;
}
.dock button svg {
    width: 10px;
    height: 10px;
    fill: none;
    stroke: #000;
}
.dock .solid {
    fill: #000;
}
.dock .thick {
    stroke-width: 2;
}

/* toolbars */
.toolbars {
    display: flex;
    gap: 2px;
    height: 32px;
    padding-left: 3px;
}
.tools {
    display: flex;
    align-items: center;
    padding: 0 4px 3px 10px;
    border: 1px solid;
    border-color: #fff #777 #777 #fff;
    background: linear-gradient(#777, #777) 3px 1px / 1px 27px no-repeat;
}
.tools button {
    flex: none;
    width: 22px;
    height: 22px;
}
.tools svg {
    width: 16px;
    height: 16px;
    margin: 0 auto;
}
.tools .raised {
    width: 20px;
    height: 20px;
    margin: 0 3px;
    border: 1px solid;
    border-color: #fff #707070 #707070 #fff;
}
.tools .on {
    border-color: #999 #fff #fff #999;
    background: #fff;
}
.dd {
    width: 9px;
}
.dd::before {
    content: "";
    display: block;
    width: 0;
    margin-left: 1px;
    border: solid transparent;
    border-width: 3px 3px 0;
    border-top-color: #000;
}
.sep {
    width: 11px;
    height: 16px;
    background: repeating-linear-gradient(#222 0 1px, transparent 1px 2px) 5px 0 / 1px 16px no-repeat;
}
.runlen {
    width: 59px;
    height: 19px;
    margin: 0 2px 0 4px;
    padding: 0 2px;
    border: 1px solid;
    border-color: #888 #fff #fff #888;
    background: #fff;
    font: 12px/17px "Liberation Mono", monospace;
    text-align: right;
}
.spin {
    display: flex;
    flex-direction: column;
    margin-right: 5px;
}
.tools .spin button {
    width: 13px;
    height: 9px;
    border: 1px solid;
    border-color: #fff #777 #777 #fff;
    font-size: 7px;
    line-height: 7px;
}
.tools label {
    margin: 0 4px 0 5px;
    font-size: 12px;
}
.search {
    width: 115px;
    height: 19px;
    border: 1px solid;
    border-color: #888 #fff #fff #888;
    background: #fff;
}
.tools .drop {
    width: 17px;
    height: 17px;
    margin: 0 3px;
    border: 1px solid;
    border-color: #fff #666 #666 #fff;
}
.drop::before {
    content: "";
    display: block;
    width: 0;
    margin: 2px auto 0;
    border: solid transparent;
    border-width: 6px 6px 0;
    border-top-color: #000;
}
.tools .wide {
    width: 25px;
}

/* wave panes: header, body, cursor rows, scrollbars */
.panes {
    flex: 1;
    display: grid;
    grid-template-columns: 159px 101px minmax(0, 1fr) 18px;
    grid-template-rows: 19px minmax(0, 1fr) 40px 19px;
    gap: 2px;
    margin: 2px 3px 0;
    border-top: 1px solid #a0a0a0;
    border-left: 1px solid #a0a0a0;
    background: #fff;
}
.panes > * {
    border-right: 1px solid #a0a0a0;
    border-bottom: 1px solid #a0a0a0;
}
.head, .corner {
    background: #808080;
    color: #fff;
}
.head-names {
    display: flex;
    align-items: center;
    gap: 3px;
    padding-left: 9px;
}
.objs {
    width: 17px;
    height: 16px;
}
.head-msgs {
    padding-right: 5px;
    line-height: 19px;
    text-align: right;
}
.panes > .black {
    background: #000;
    min-width: 0;
}
.black svg {
    width: 100%;
    height: 100%;
}
.names, .values {
    padding-top: 2px;
    background: #808080;
    color: #fff;
    white-space: nowrap;
    overflow: hidden;
}
.names {
    border-left: 8px solid #fff;
}
.names li {
    display: flex;
    align-items: center;
    height: 17px;
    padding-left: 20px;
}
.names li svg {
    width: 15px;
    height: 15px;
    margin-right: 5px;
}
.names .exp {
    width: 15px;
    height: 9px;
    margin-left: -15px;
    background: linear-gradient(#000, #000) 2px 4px / 5px 1px no-repeat, linear-gradient(#000, #000) 4px 2px / 1px 5px no-repeat, linear-gradient(#fff, #fff) 0 0 / 9px 9px no-repeat, linear-gradient(#ddd, #ddd) 9px 4px / 6px 1px no-repeat;
}
.values li {
    height: 17px;
    padding-left: 2px;
}
.names .sel, .values .sel {
    background: #fff;
    color: #000;
}
.end {
    height: 1px;
    margin: 0 4px 0 2px;
    background: #000;
}
.names .end::before {
    content: "";
    display: block;
    width: 0;
    border: solid transparent;
    border-width: 3px 0 3px 3px;
    border-left-color: #000;
}
.waves {
    position: relative;
}
.waves text, .ruler text {
    font: 11px Roboto, sans-serif;
}
.tip {
    position: absolute;
    left: 560px;
    top: 186px;
    padding: 4px 1px 0 2px;
    background: #ffffe1;
    color: #000;
    font: 12px/15px "Liberation Mono", monospace;
    white-space: nowrap;
}
.foot {
    display: flex;
    flex-direction: column;
    background: #808080;
    color: #fff;
}
.foot > div {
    display: flex;
    align-items: center;
    justify-content: flex-end;
    padding-right: 9px;
}
.foot .now {
    height: 22px;
}
.foot .cur {
    flex: 1;
    padding-right: 0;
}
.cur b {
    flex: 1;
    padding-right: 9px;
    background: #fff;
    color: #000;
    text-align: right;
}
.mini {
    display: flex;
    gap: 1px;
    margin-right: auto;
    padding-left: 7px;
}
.cur .mini {
    margin-right: 1px;
    padding-left: 10px;
}
.mini svg {
    width: 12px;
    height: 12px;
}
.hbar, .vbar {
    display: flex;
    background: #f0f0f0;
}
.hbar {
    border-top: 1px solid #808080;
}
.vbar {
    flex-direction: column;
}
.first {
    border-left: 8px solid #808080;
}
.arr {
    display: grid;
    place-items: center;
    width: 16px;
    height: 17px;
    border: 1px solid;
    border-color: #fff #777 #777 #fff;
    background: #f0f0f0;
}
.arr::before {
    content: "";
    width: 0;
    border: 4px solid transparent;
}
.left::before {
    border-left-width: 0;
    border-right-color: #000;
}
.right::before {
    border-right-width: 0;
    border-left-color: #000;
}
.up::before {
    border-top-width: 0;
    border-bottom-color: #000;
}
.down::before {
    border-bottom-width: 0;
    border-top-color: #000;
}
.dim .left::before {
    border-right-color: #a0a0a0;
}
.dim .right::before {
    border-left-color: #a0a0a0;
}
.dim i {
    flex: 1;
    background: conic-gradient(#fff 25%, #eee 0 50%, #fff 0 75%, #eee 0) 0 0 / 2px 2px;
}
.trough {
    flex: 529;
    background: #c8c8c8;
}
.thumb {
    flex: 1066;
    border: 1px solid;
    border-color: #fff #777 #777 #fff;
    border-bottom-width: 2px;
    background: linear-gradient(#ffd000, #ffd000) 23.5% 0 / 1px 100% no-repeat #f0f0f0;
}
.v-thumb {
    height: 100px;
    border-bottom: 1px solid #ccc;
}
.v-page {
    height: 16px;
    background: #fff;
}
.v-rest {
    flex: 1;
}

.status {
    display: flex;
    gap: 1px;
    height: 20px;
    margin-top: 1px;
    padding: 0 2px 1px;
    border-top: 1px solid #fff;
    line-height: 18px;
}
.status span {
    width: 169px;
    padding-left: 5px;
    border-top: 1px solid #a0a0a0;
    border-left: 1px solid #a0a0a0;
}
.status span + span {
    flex: 1;
}
.status svg {
    align-self: flex-end;
    width: 10px;
    height: 10px;
    stroke: #888;
}

/* taskbar */
.taskbar {
    position: relative;
    display: grid;
    grid-template-columns: 1fr auto 1fr;
    align-items: center;
    height: 49px;
    border-top: 1px solid #cfd8e4;
    background: linear-gradient(90deg, #d8f5f9, #d6eff5 18%, #d6e0ef 26%, #d9e9f4 35%, #d5e1ea 45%, #e0ebf5 56%, #dce8f0 64%, #e5e4f4 75%, #dddfed);
    font-family: "Noto Sans", "Noto Sans CJK SC", sans-serif;
    font-size: 12px;
    line-height: 16px;
}
.weather {
    display: flex;
    align-items: center;
    gap: 9px;
    padding-left: 22px;
}
.weather svg {
    width: 20px;
    height: 20px;
}
.weather span {
    color: #555;
}
.apps {
    display: flex;
}
.apps button {
    width: 44px;
    height: 40px;
}
.apps svg {
    width: 24px;
    height: 24px;
    margin: 0 auto;
}
.apps .active {
    border-radius: 4px;
    background: #f7fafd;
}
.apps .active::after, .apps .open::after {
    content: "";
    display: block;
    width: 6px;
    height: 3px;
    margin: 4px auto -7px;
    border-radius: 2px;
    background: #808488;
}
.apps .active::after {
    width: 16px;
    background: #0078d4;
}
.tray {
    display: flex;
    align-items: center;
    justify-content: flex-end;
    gap: 6px;
    padding-right: 20px;
}
.tray svg {
    width: 18px;
    height: 18px;
}
.ime {
    margin: 0 9px 0 7px;
    font-size: 14px;
}
.clock {
    width: 62px;
    text-align: right;
}
.mark {
    position: absolute;
    right: 14px;
    bottom: 6px;
    color: rgba(165, 165, 170, .8);
    font: 20px/28px "Noto Sans CJK SC", sans-serif;
    text-shadow: 1px 1px 0 rgba(90, 90, 95, .6), -1px -1px 0 rgba(255, 255, 255, .6);
}
```
FILE: script.js
```js
var T0 = 61, T1 = 189, END = 178, CURSOR = 90;
var GREEN = "#008000", BUS = "#b4ffb4", GRID = "#808080", GOLD = "#ffd000";
var PITCH = 17;

// toggle times of a clock
function clock(first, step) {
    var t = [];
    for (var i = first; i <= END; i += step) t.push(i);
    return t;
}
// [row, start level, toggle times]
var bits = [
    [1, 0, clock(62, 2)],
    [2, 1, clock(64, 4)],
    [3, 1, []],
    [4, 1, []],
    [5, 0, [108]],
    [6, 0, [90]],
    [9, 0, []],
    [10, 1, [108]],
    [11, 0, [90]]
];
var buses = [
    [7, "61:0000 94:5104 98:f75d 102:9eb7 106:0425 110:caac 114:c31f 118:02c6 122:0070 126:ff99 130:0000 138:b9c7 142:0c98 146:401d 150:cd68 154:c93d 158:f658 162:bb55 166:0055 170:ff94 174:0000"],
    [8, "61:0000 124:5104 132:f75d 140:9eb7 148:0425 156:caac 164:c31f 172:02c6"]
];

function setup(id) {
    var el = document.getElementById(id);
    var w = el.clientWidth, h = el.clientHeight;
    var scale = (w - 7) / (T1 - T0);
    return {
        el: el, w: w, h: h,
        x: function (t) { return Math.round(3 + (t - T0) * scale) + 0.5; }
    };
}
function line(d, color, width) {
    return '<path fill="none" shape-rendering="crispEdges" stroke="' + color + '" stroke-width="' + (width || 1) + '" d="' + d + '"/>';
}
function text(x, y, s, color, anchor) {
    return '<text x="' + x + '" y="' + y + '" fill="' + color + '" text-anchor="' + (anchor || "start") + '">' + s + '</text>';
}

function drawWaves() {
    var c = setup("waves"), out = "", d = "";
    for (var t = 65; t < T1; t += 5) d += "M" + c.x(t) + " 0V" + c.h;
    out += line("M" + c.x(CURSOR) + " 0V" + c.h, GOLD, 3);
    out += line(d, GRID);
    bits.forEach(function (b) {
        var hi = 4.5 + b[0] * PITCH, lo = hi + 12, v = b[1];
        var p = "M" + c.x(T0) + " " + (v ? hi : lo);
        b[2].forEach(function (t) {
            v = 1 - v;
            p += "H" + c.x(t) + "V" + (v ? hi : lo);
        });
        out += line(p + "H" + c.x(END), GREEN);
    });
    buses.forEach(function (b) {
        var hi = 4.5 + b[0] * PITCH, lo = hi + 12, p = "";
        p += "M" + (c.x(T0) - 1) + " " + hi + "H" + c.x(END) + "M" + (c.x(T0) - 1) + " " + lo + "H" + c.x(END);
        b[1].split(" ").forEach(function (s, i) {
            var part = s.split(":"), x = c.x(+part[0]);
            if (i) {
                out += '<rect x="' + (x - 1) + '" y="' + (hi - 1) + '" width="3" height="14"/>';
                p += "M" + (x - 1) + " " + hi + "v3l1 1v4l-1 1v3M" + (x + 1) + " " + hi + "v3l-1 1v4l1 1v3";
            }
            out += text(x + 4, hi + 10, part[1], "#fff");
        });
        out += line(p, BUS);
    });
    c.el.innerHTML = out;
}

function drawRuler() {
    var c = setup("ruler"), out = "", d = "";
    for (var t = T0; t < T1; t++) {
        d += "M" + c.x(t) + (t % 5 ? " 3V7" : " 0V7");
        if (t % 10 == 0) out += text(c.x(t), 20, t + " ns", GREEN, "middle");
    }
    var x = c.x(CURSOR);
    out += line(d, GREEN);
    out += line("M3 22.5H" + (c.w - 3), GRID);
    out += line("M" + x + " 0V22", GOLD, 3);
    out += '<rect x="' + (x - 15) + '" y="23.5" width="30" height="15" stroke="' + GOLD + '" shape-rendering="crispEdges"/>';
    out += text(x, 35, CURSOR + " ns", GOLD, "middle");
    c.el.innerHTML = out;
}

function drawTop() {
    var c = setup("top");
    c.el.innerHTML = line("M" + c.x(CURSOR) + " 1V" + c.h, GOLD, 3);
}

function draw() {
    drawTop();
    drawWaves();
    drawRuler();
}
draw();
window.addEventListener("resize", draw);
```
